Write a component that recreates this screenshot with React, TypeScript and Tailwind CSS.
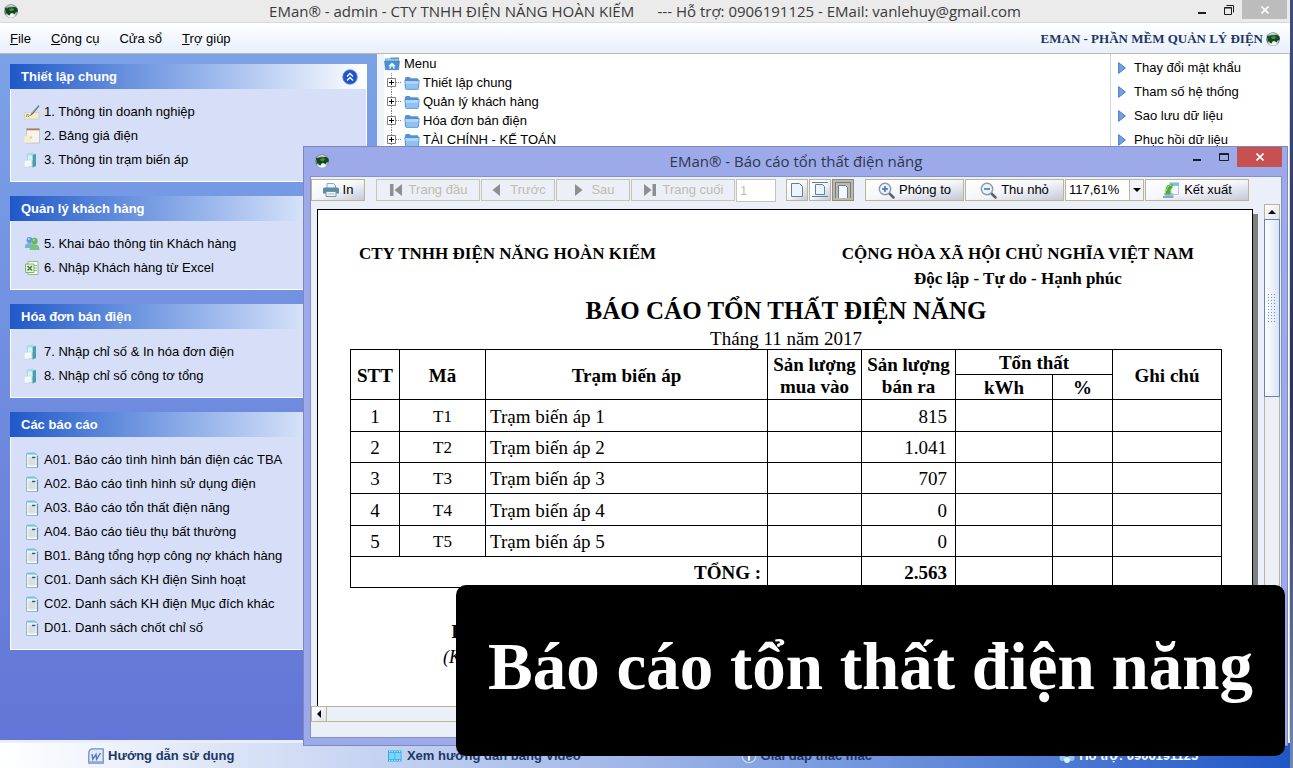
import React from "react";

type IconProps = { className?: string };

const Globe = ({ className = "h-4 w-4" }: IconProps) => (
  <svg viewBox="0 0 16 16" className={`${className} shrink-0`} aria-hidden="true">
    <circle cx="8" cy="8.200" r="6.900" fill="#77858f" />
    <ellipse cx="8" cy="10.500" rx="5.600" ry="4.300" fill="#b4c3ca" />
    <ellipse cx="8" cy="12.500" rx="3.600" ry="2.100" fill="#eef6f8" />
    <path d="M2.500 4.500Q8-.5 13.500 4.500 8 2.500 2.500 4.500z" fill="#dde6ea" />
    <path d="M1.500 4.500l2.500 1 2-1h3l2.500-.8 3 1.800.3 3-2 .8-1.300 2-1.500-1-1-.5-1.500.8-1 2-1.700-.8-.6-1.600-2 .8.700-2.500z" fill="#14471c" />
    <path d="M6 6l3-.8 2.500.8-1.500 1.800-3 .2z" fill="#3f9a3c" />
  </svg>
);

const NoteIcon = () => (
  <svg viewBox="0 0 16 16" className="h-4 w-4 shrink-0" aria-hidden="true">
    <path d="M.5 8.500h14.500v6.500H.5z" fill="#f4efc4" stroke="#c9c8b4" strokeWidth=".6" />
    <path d="M2.500 13q0-4 1.800-2.500T4 13" fill="none" stroke="#8d8a6c" />
    <path d="M14.500 1L7.500 9l-2 3.500L9 10 15.500 2z" fill="#5f6c72" />
    <path d="M14.500 1L8 9" stroke="#b7c3c7" strokeWidth=".7" />
  </svg>
);

const PriceIcon = () => (
  <svg viewBox="0 0 16 16" className="h-4 w-4 shrink-0" aria-hidden="true">
    <path d="M2.500 1h13v14h-13z" fill="#f6f4ee" stroke="#b9b6ae" strokeWidth=".7" />
    <path d="M2.500.5h13v1.800h-13z" fill="#b57b5e" />
    <path d="M.5 7.500h6l1 7H.5z" fill="#f5eecb" />
    <circle cx="7" cy="9.500" r="1" fill="#d9c878" />
  </svg>
);

const StationIcon = () => (
  <svg viewBox="0 0 16 16" className="h-4 w-4 shrink-0" aria-hidden="true">
    <path d="M2.500 2L8 .5l3.500 1V14l-2.500 1.500L3 14z" fill="#a5dbe2" />
    <path d="M8.500 3l3.500-1v12l-3.500 1.500z" fill="#4b9dad" />
    <path d="M4 3l4.500.7v4.800L4 8z" fill="#d5f2f4" />
    <path d="M.3 8.500l7.500-.7v6.500l-7.500.9z" fill="#f4f8f7" stroke="#c6d6d8" strokeWidth=".5" />
  </svg>
);

const PeopleIcon = () => (
  <svg viewBox="0 0 16 16" className="h-4 w-4 shrink-0" aria-hidden="true">
    <circle cx="5.500" cy="4" r="3" fill="#5d9bd3" />
    <path d="M.8 12q0-5 4.700-5t4.700 5z" fill="#78b0dd" />
    <circle cx="10.500" cy="5" r="3.200" fill="#66b36a" />
    <path d="M5.500 14q0-5.800 5-5.800t5 5.800z" fill="#79c17c" />
    <circle cx="9.800" cy="4" r="1" fill="#b7e0b5" />
    <circle cx="4.800" cy="3" r="1" fill="#b9daf2" />
  </svg>
);

const ExcelIcon = () => (
  <svg viewBox="0 0 16 16" className="h-4 w-4 shrink-0" aria-hidden="true">
    <path d="M4 1.500h10v13H4z" fill="#fff" stroke="#8fb886" />
    <path d="M10 5.500h3M10 8h3M10 10.500h3" stroke="#7fb274" />
    <path d="M1.500 4h8.500v8.500H1.500z" fill="#e8f4e2" stroke="#7fb274" />
    <path d="M3.500 6l4.500 4.500M8 6l-4.500 4.500" stroke="#3d8234" strokeWidth="1.500" />
  </svg>
);

const ReportIcon = () => (
  <svg viewBox="0 0 16 16" className="h-4 w-4 shrink-0" aria-hidden="true">
    <path d="M2.500 1.500h8.500l2.500 2v12h-11z" fill="#eeefef" stroke="#8fbcd4" />
    <path d="M13.500 4v11.500" stroke="#5a90ba" strokeWidth="1.200" />
    <path d="M3 .5h8l1.500 2H3z" fill="#6ec3e4" />
    <path d="M4.500 6h4M4.500 8h7M4.500 10h7M4.500 12h7" stroke="#cbcdcd" />
    <path d="M8 5.500h3.500" stroke="#2e5f92" strokeWidth="1.500" />
    <path d="M3 13.500h10v1.500H3z" fill="#f3f9fc" />
  </svg>
);

const Folder = () => (
  <svg viewBox="0 0 16 16" className="h-4 w-4 shrink-0" aria-hidden="true">
    <path d="M1 3.500q0-1.500 1.500-1.500h3l1 1.200h6.500q1.500 0 1.500 1.300v8.500H1z" fill="#5291d6" />
    <path d="M.8 5.500h14.400l-.7 8q-.1.900-1 .9H2.500q-.9 0-1-.9z" fill="#8fc2f2" stroke="#4583cb" strokeWidth=".7" />
    <path d="M1.500 6.200h13l-.2 2.600H1.700z" fill="#b5d9f9" />
  </svg>
);

const HomeFolder = () => (
  <svg viewBox="0 0 16 16" className="h-4 w-4 shrink-0" aria-hidden="true">
    <path d="M1 2.500h5l1-1h8v4H1z" fill="#5a95d2" />
    <path d="M1.500 3.300h13v2h-13z" fill="#a9dcf2" />
    <path d="M.5 5h15l-1 8.700H1.500z" fill="#4e90d4" stroke="#3a77ba" strokeWidth=".6" />
    <path d="M8 6.500l3.500 3.200h-1V12.500H9v-2H7v2H5.500V9.700h-1z" fill="#eaf5ff" />
  </svg>
);

const PrinterIcon = () => (
  <svg viewBox="0 0 16 16" className="h-4 w-4 shrink-0" aria-hidden="true">
    <path d="M4 6V1.500h6.500l2 2V6" fill="#eef4f7" stroke="#8aa9b7" />
    <path d="M1.500 5.500h13q1.500 0 1.500 1.500v4.500H0V7q0-1.500 1.500-1.500z" fill="#5d8ba3" />
    <path d="M3 9.500h10v5H3z" fill="#f1f5f7" stroke="#7296a7" />
    <path d="M4.500 12h7" stroke="#a9bfca" />
  </svg>
);

const NavIcon = ({ kind }: { kind: string }) => (
  <svg viewBox="0 0 14 12" className="h-3 w-[14px] shrink-0" fill="#8f8f8f" aria-hidden="true">
    {kind === "first" && <path d="M1 0h3.500v12H1zM13 0v12L5.500 6z" />}
    {kind === "prev" && <path d="M10 0v12L2.500 6z" />}
    {kind === "next" && <path d="M4 0v12l7.500-6z" />}
    {kind === "last" && <path d="M1 0v12l7.500-6zM9.500 0H13v12H9.500z" />}
  </svg>
);

const PageIcon = ({ kind }: { kind: string }) => (
  <svg viewBox="0 0 18 18" className="h-[18px] w-[18px] shrink-0" fill="none" stroke="#5f7f9e" aria-hidden="true">
    {kind === "page" && <path d="M3.500 2.500h8l3 3v10h-11z" fill="#eef4fb" />}
    {kind === "width" && <path d="M4.500 3.500h7l2 2v8h-9zM1 1.500h16M1 15.500h16" fill="#eef4fb" />}
    {kind === "full" && (
      <>
        <path d="M1.500 17V1.500h15V17" />
        <path d="M4.500 17V4.500h7l2 2V17" fill="#f4f7fb" />
      </>
    )}
  </svg>
);

const ZoomIcon = ({ plus }: { plus?: boolean }) => (
  <svg viewBox="0 0 17 17" className="h-[17px] w-[17px] shrink-0" fill="none" aria-hidden="true">
    <path d="M11 11l4.500 4.500" stroke="#59636e" strokeWidth="2.500" strokeLinecap="round" />
    <circle cx="7" cy="7" r="5.700" fill="#e9f3fc" stroke="#8f9aa6" strokeWidth="1.400" />
    <path d={plus ? "M4 7h6M7 4v6" : "M4 7h6"} stroke="#3b6cc4" strokeWidth="1.500" />
  </svg>
);

const ExportIcon = () => (
  <svg viewBox="0 0 18 18" className="h-[18px] w-[18px] shrink-0" aria-hidden="true">
    <path d="M9 4.500h7.500v9H9z" fill="#f4f8fc" stroke="#b3c8da" />
    <path d="M7 1.500h10v3H9z" fill="#7fbae6" />
    <path d="M2 12h9l1 4.500H3z" fill="#9fc0dd" />
    <path d="M1 15h10v2H1z" fill="#7fa9d0" />
    <path d="M3.500 13.500V9q0-6 7-6v4q-2 0-2 2.500v4z" fill="#4fb02a" />
    <path d="M4.500 10q0-5 5-6" fill="none" stroke="#a8e27c" />
  </svg>
);

const WordIcon = () => (
  <svg viewBox="0 0 16 16" className="h-4 w-4 shrink-0" aria-hidden="true">
    <path d="M5 .8h10.200v14.400H.8V5q0-4.200 4.200-4.200z" fill="#dfe8f6" stroke="#6f8fc4" strokeWidth="1.300" />
    <path d="M4 6l.8 5.200L8 6.500l.6 4.700L12.500 5" fill="none" stroke="#5579b8" strokeWidth="1.400" />
    <path d="M1 14h14" stroke="#8aa6d3" strokeWidth="1.500" />
  </svg>
);

const FilmIcon = () => (
  <svg viewBox="0 0 16 16" className="h-4 w-4 shrink-0" aria-hidden="true">
    <path d="M1 2.500h13.500v11H1z" fill="#29aee8" />
    <path d="M2 5h5.500v6H2zM8.200 5h5.500v6H8.200z" fill="#7fd3f6" />
    <path d="M2 3.700h12M2 12.300h12" stroke="#bfe9fb" strokeWidth="1.200" strokeDasharray="1.300 1.200" />
  </svg>
);

const InfoIcon = () => (
  <svg viewBox="0 0 16 16" className="h-4 w-4 shrink-0" aria-hidden="true">
    <circle cx="8" cy="8" r="6.700" fill="#6f98d2" stroke="#c9d7ea" strokeWidth="1.300" />
    <path d="M8 3.500v2M8 7v5.500" stroke="#fff" strokeWidth="2" />
  </svg>
);

const SupportIcon = () => (
  <svg viewBox="0 0 16 16" className="h-4 w-4 shrink-0" aria-hidden="true">
    <circle cx="8" cy="4" r="2.800" fill="#bfe2f8" />
    <circle cx="3.500" cy="10" r="3" fill="#8cc8f0" />
    <circle cx="12.500" cy="10" r="3" fill="#8cc8f0" />
    <circle cx="8" cy="12" r="3" fill="#d7effc" />
  </svg>
);

const Chevrons = () => (
  <svg viewBox="0 0 16 16" className="h-4 w-4" aria-hidden="true">
    <circle cx="8" cy="8" r="7.300" fill="#1f54c8" stroke="#6d8fe0" strokeWidth=".8" />
    <path d="M5 7.500l3-3 3 3M5 11.500l3-3 3 3" fill="none" stroke="#fff" strokeWidth="1.300" />
  </svg>
);

const BlueArrow = () => (
  <svg viewBox="0 0 8 12" className="h-3 w-2 shrink-0" aria-hidden="true">
    <path d="M.7.7l6.600 5.300L.7 11.300z" fill="#6fa3ec" stroke="#3566c4" strokeWidth=".9" />
  </svg>
);

const Minimize = () => (
  <svg viewBox="0 0 10 10" className="h-[10px] w-[10px]" aria-hidden="true">
    <path d="M1 7h8v2H1z" fill="#1c1c1c" />
  </svg>
);
const Restore = () => (
  <svg viewBox="0 0 10 10" className="h-[10px] w-[10px]" fill="none" stroke="#1c1c1c" aria-hidden="true">
    <path d="M.5 2.500h7v7h-7zM.5 3h7M2.500.5h7v7" />
  </svg>
);
const Maximize = () => (
  <svg viewBox="0 0 10 8" className="h-2 w-[10px]" fill="none" stroke="#1c1c1c" aria-hidden="true">
    <path d="M.5.5h9v7h-9zM.5 1.500h9" />
  </svg>
);
const Close = () => (
  <svg viewBox="0 0 8 8" className="h-2 w-2" aria-hidden="true">
    <path d="M.5.5l7 7M7.500.5l-7 7" stroke="#fff" strokeWidth="1.600" />
  </svg>
);

const panels = [
  {
    title: "Thiết lập chung",
    items: [
      { text: "1. Thông tin doanh nghiệp", icon: <NoteIcon /> },
      { text: "2. Bảng giá điện", icon: <PriceIcon /> },
      { text: "3. Thông tin trạm biến áp", icon: <StationIcon /> },
    ],
  },
  {
    title: "Quản lý khách hàng",
    items: [
      { text: "5. Khai báo thông tin Khách hàng", icon: <PeopleIcon /> },
      { text: "6. Nhập Khách hàng từ Excel", icon: <ExcelIcon /> },
    ],
  },
  {
    title: "Hóa đơn bán điện",
    items: [
      { text: "7. Nhập chỉ số & In hóa đơn điện", icon: <StationIcon /> },
      { text: "8. Nhập chỉ số công tơ tổng", icon: <StationIcon /> },
    ],
  },
  {
    title: "Các báo cáo",
    items: [
      "A01. Báo cáo tình hình bán điện các TBA",
      "A02. Báo cáo tình hình sử dụng điện",
      "A03. Báo cáo tổn thất điện năng",
      "A04. Báo cáo tiêu thụ bất thường",
      "B01. Bảng tổng hợp công nợ khách hàng",
      "C01. Danh sách KH điện Sinh hoạt",
      "C02. Danh sách KH điện Mục đích khác",
      "D01. Danh sách chốt chỉ số",
    ].map((text) => ({ text, icon: <ReportIcon /> })),
  },
];

const treeItems = ["Thiết lập chung", "Quản lý khách hàng", "Hóa đơn bán điện", "TÀI CHÍNH - KẾ TOÁN"];
const quickLinks = ["Thay đổi mật khẩu", "Tham số hệ thống", "Sao lưu dữ liệu", "Phục hồi dữ liệu"];
const stations = [
  { code: "T1", name: "Trạm biến áp 1", sold: "815" },
  { code: "T2", name: "Trạm biến áp 2", sold: "1.041" },
  { code: "T3", name: "Trạm biến áp 3", sold: "707" },
  { code: "T4", name: "Trạm biến áp 4", sold: "0" },
  { code: "T5", name: "Trạm biến áp 5", sold: "0" },
];

const toolButton =
  "flex h-[22px] shrink-0 items-center justify-center gap-1 border border-[#bdb497] bg-linear-to-br from-white via-[#f4f6fa] to-[#c3c9d8]";
const navButton =
  "flex h-[22px] shrink-0 items-center justify-center gap-[6px] border border-[#c9c3b4] bg-[#ebeff8] text-[#c3bba9]";
const cell = "border border-black pt-[2px]";

function Sidebar() {
  return (
    <aside className="flex w-[377px] shrink-0 flex-col gap-[14px] bg-linear-to-b from-[#7ba2e7] to-[#6375d6] p-[10px]">
      {panels.map((panel, index) => (
        <section key={panel.title}>
          <h2 className="flex h-[25px] items-center justify-between bg-linear-to-r from-[#2058c8] to-white pr-[9px] pl-[11px] font-bold text-white">
            {panel.title}
            {index === 0 && (
              <button type="button" aria-label="Thu gọn">
                <Chevrons />
              </button>
            )}
          </h2>
          <ul className="border border-t-0 border-white bg-[#d6dff7] pt-[11px] pb-[9px] pl-[13px]">
            {panel.items.map((item) => (
              <li key={item.text}>
                <a href="#" className="flex h-6 items-center gap-1 whitespace-nowrap">
                  {item.icon}
                  {item.text}
                </a>
              </li>
            ))}
          </ul>
        </section>
      ))}
    </aside>
  );
}

function MenuTree() {
  return (
    <div className="flex-1 border-l-[7px] border-[#edf2fb] bg-white">
      <div className="flex h-[19px] items-center gap-1">
        <HomeFolder />
        Menu
      </div>
      <ul>
        {treeItems.map((item) => (
          <li key={item} className="flex h-[19px] items-center gap-[3px]">
            <svg viewBox="0 0 17 19" className="h-[19px] w-[17px] shrink-0" fill="none" aria-hidden="true">
              <path d="M7.500 0v19M12 9.500h5" stroke="#808080" strokeDasharray="1 1" />
              <path d="M3.500 5.500h8v8h-8z" fill="#fff" stroke="#808080" />
              <path d="M5 9.500h5M7.500 7v5" stroke="#000" />
            </svg>
            <Folder />
            <span>{item}</span>
          </li>
        ))}
      </ul>
    </div>
  );
}

function Report() {
  return (
    <div className="mt-[5px] mr-[11px] ml-[6px] flex-1 border border-b-0 border-black bg-white pt-[31px] pr-[30px] pl-8 font-['Liberation_Serif',serif] text-black shadow-[5px_5px_0_#808080]">
      <div className="flex justify-between pr-7 pl-[9px] text-[17px] leading-[25px] font-bold">
        <p>CTY TNHH ĐIỆN NĂNG HOÀN KIẾM</p>
        <p className="text-center">
          CỘNG HÒA XÃ HỘI CHỦ NGHĨA VIỆT NAM
          <br />
          Độc lập - Tự do - Hạnh phúc
        </p>
      </div>
      <h1 className="mt-1 text-center text-[25px] leading-8 font-bold">BÁO CÁO TỔN THẤT ĐIỆN NĂNG</h1>
      <p className="mt-[2px] text-center text-[19px] leading-5">Tháng 11 năm 2017</p>
      <table className="w-full table-fixed border-collapse text-[19px] leading-[22px]">
        <colgroup>
          <col className="w-[49px]" />
          <col className="w-[86px]" />
          <col />
          <col className="w-[94px]" />
          <col className="w-[94px]" />
          <col className="w-[97px]" />
          <col className="w-[60px]" />
          <col className="w-[109px]" />
        </colgroup>
        <thead>
          <tr className="h-[25px]">
            <th rowSpan={2} className={cell}>STT</th>
            <th rowSpan={2} className={cell}>Mã</th>
            <th rowSpan={2} className={cell}>Trạm biến áp</th>
            <th rowSpan={2} className={cell}>Sản lượng mua vào</th>
            <th rowSpan={2} className={cell}>Sản lượng bán ra</th>
            <th colSpan={2} className={cell}>Tổn thất</th>
            <th rowSpan={2} className={cell}>Ghi chú</th>
          </tr>
          <tr className="h-[25px]">
            <th className={cell}>kWh</th>
            <th className={cell}>%</th>
          </tr>
        </thead>
        <tbody>
          {stations.map((row, index) => (
            <tr key={row.code} className={index % 3 === 0 ? "h-8" : "h-[31px]"}>
              <td className={`${cell} text-center`}>{index + 1}</td>
              <td className={`${cell} text-center text-[17px]`}>{row.code}</td>
              <td className={`${cell} pl-1`}>{row.name}</td>
              <td className={cell} />
              <td className={`${cell} pr-2 text-right`}>{row.sold}</td>
              <td className={cell} />
              <td className={cell} />
              <td className={cell} />
            </tr>
          ))}
          <tr className="h-[31px] font-bold">
            <td colSpan={3} className={`${cell} pr-[6px] text-right`}>TỔNG :</td>
            <td className={cell} />
            <td className={`${cell} pr-2 text-right`}>2.563</td>
            <td className={cell} />
            <td className={cell} />
            <td className={cell} />
          </tr>
        </tbody>
      </table>
      <div className="mt-8 ml-[93px] w-fit text-center text-[18px] leading-[25px]">
        <p className="font-bold">Lập biểu</p>
        <p className="italic">(Ký, họ tên)</p>
      </div>
    </div>
  );
}

function ReportWindow() {
  return (
    <div
      role="dialog"
      aria-labelledby="report-title"
      className="absolute top-[146px] right-[5px] bottom-[22px] left-[303px] flex flex-col border border-[#7d86bd] bg-[#9daae9] pr-[5px] pb-[7px] pl-[6px]"
    >
      <header className="relative flex h-[29px] shrink-0 items-center pb-[2px]">
        <div className="pl-1">
          <Globe />
        </div>
        <h2
          id="report-title"
          className="flex-1 pr-5 text-center font-['Open_Sans','Noto_Sans',sans-serif] text-[15px] text-[#30364c]"
        >
          EMan® - Báo cáo tổn thất điện năng
        </h2>
        <div className="absolute top-0 right-0 flex h-5">
          <button type="button" aria-label="Thu nhỏ cửa sổ" className="flex w-[27px] items-center justify-center">
            <Minimize />
          </button>
          <button type="button" aria-label="Phóng to cửa sổ" className="flex w-[27px] items-center justify-center">
            <Maximize />
          </button>
          <button type="button" aria-label="Đóng" className="flex w-[45px] items-center justify-center bg-[#c75050]">
            <Close />
          </button>
        </div>
      </header>
      <div className="flex min-h-0 flex-1 flex-col border border-[#8590c9] bg-[#ebeff8]">
        <div className="flex h-[27px] shrink-0 items-start gap-px pt-[2px]">
          <button type="button" className={`${toolButton} w-[54px]`}>
            <PrinterIcon />
            In
          </button>
          <button type="button" disabled className={`${navButton} ml-[10px] w-[104px]`}>
            <NavIcon kind="first" />
            Trang đầu
          </button>
          <button type="button" disabled className={`${navButton} w-[74px]`}>
            <NavIcon kind="prev" />
            Trước
          </button>
          <button type="button" disabled className={`${navButton} w-[74px]`}>
            <NavIcon kind="next" />
            Sau
          </button>
          <button type="button" disabled className={`${navButton} w-[104px]`}>
            <NavIcon kind="last" />
            Trang cuối
          </button>
          <input
            aria-label="Số trang"
            defaultValue="1"
            disabled
            className="h-[23px] w-10 shrink-0 border border-[#c9c3b4] bg-white px-[3px] text-[#c3bba9]"
          />
          <button type="button" aria-label="Cả trang" className={`${toolButton} ml-[9px] w-[22px]`}>
            <PageIcon kind="page" />
          </button>
          <button type="button" aria-label="Vừa chiều rộng" className={`${toolButton} w-[22px]`}>
            <PageIcon kind="width" />
          </button>
          <button
            type="button"
            aria-label="Kích thước thật"
            aria-pressed="true"
            className="flex h-[22px] w-[22px] shrink-0 items-center justify-center border border-[#8f8a7c] bg-[#c2b8a6]"
          >
            <PageIcon kind="full" />
          </button>
          <button type="button" className={`${toolButton} ml-[10px] w-[99px]`}>
            <ZoomIcon plus />
            Phóng to
          </button>
          <button type="button" className={`${toolButton} w-[99px]`}>
            <ZoomIcon />
            Thu nhỏ
          </button>
          <div className="relative flex h-[22px] w-[79px] shrink-0 border border-[#bdb497] bg-white">
            <select aria-label="Tỷ lệ" className="w-full appearance-none pl-[3px] outline-none">
              <option>117,61%</option>
            </select>
            <span className="pointer-events-none absolute inset-y-0 right-0 flex w-[14px] items-center justify-center border-l border-[#bdb497] bg-[#f2f4f9]">
              <svg viewBox="0 0 8 4" className="h-1 w-2" aria-hidden="true">
                <path d="M0 0h8L4 4z" />
              </svg>
            </span>
          </div>
          <button type="button" className={`${toolButton} w-[104px]`}>
            <ExportIcon />
            Kết xuất
          </button>
        </div>
        <div className="flex min-h-0 flex-1">
          <div className="flex min-w-0 flex-1 flex-col">
            <div className="flex min-h-0 flex-1 overflow-hidden">
              <Report />
            </div>
            <div className="flex h-4 shrink-0 border border-[#bdb497]">
              <button
                type="button"
                aria-label="Cuộn sang trái"
                className="flex w-[15px] items-center justify-center border-r border-[#bdb497] bg-linear-to-br from-white to-[#dfe3ec]"
              >
                <svg viewBox="0 0 4 8" className="h-2 w-1" aria-hidden="true">
                  <path d="M4 0v8L0 4z" />
                </svg>
              </button>
            </div>
          </div>
          <div className="mr-px flex w-4 flex-col border border-[#bdb497]">
            <button
              type="button"
              aria-label="Cuộn lên"
              className="flex h-[14px] items-center justify-center bg-linear-to-br from-white to-[#dfe3ec]"
            >
              <svg viewBox="0 0 8 4" className="h-1 w-2" aria-hidden="true">
                <path d="M0 4h8L4 0z" />
              </svg>
            </button>
            <div className="-mx-px flex h-[178px] items-center justify-center border border-[#5f87b8] bg-linear-to-r from-white to-[#dbe3f3]">
              <div className="h-[30px] w-[10px] bg-[radial-gradient(circle,#6d97cc_1px,transparent_1px)] bg-size-[3px_3px]" />
            </div>
          </div>
        </div>
        <div className="h-[15px] shrink-0" />
      </div>
    </div>
  );
}

const footerLinks = [
  { text: "Hướng dẫn sử dụng", icon: <WordIcon />, tone: "text-[#1c3768]" },
  { text: "Xem hướng dẫn bằng Video", icon: <FilmIcon />, tone: "text-[#1c3768]" },
  { text: "Giải đáp thắc mắc", icon: <InfoIcon />, tone: "text-[#1c3768]" },
  { text: "Hỗ trợ: 0906191125", icon: <SupportIcon />, tone: "text-white" },
];

export default function App() {
  return (
    <div className="relative flex min-h-screen w-full font-['Liberation_Sans',sans-serif] text-[13px] leading-5 text-black">
      <div className="flex min-w-0 flex-1 flex-col">
        <header className="relative flex h-[23px] items-center border-b border-[#d9d9d9] bg-[#ebebeb]">
          <div className="pl-[3px]">
            <Globe />
          </div>
          <h1 className="flex-1 pr-[19px] text-center font-['Open_Sans','Noto_Sans',sans-serif] text-[15px] whitespace-pre text-[#3a3a3a]">
            {"EMan® - admin - CTY TNHH ĐIỆN NĂNG HOÀN KIẾM      --- Hỗ trợ: 0906191125 - EMail: vanlehuy@gmail.com"}
          </h1>
          <div className="absolute top-0 right-[3px] flex h-[19px]">
            <button type="button" aria-label="Thu nhỏ cửa sổ" className="flex w-[27px] items-center justify-center">
              <Minimize />
            </button>
            <button type="button" aria-label="Khôi phục cửa sổ" className="flex w-[27px] items-center justify-center">
              <Restore />
            </button>
            <button type="button" aria-label="Đóng" className="flex w-[45px] items-center justify-center bg-[#bcbcbc]">
              <Close />
            </button>
          </div>
        </header>
        <nav className="flex h-[31px] items-center gap-5 border-b border-[#c3b9a0] bg-linear-to-b from-white to-[#e8effc] pt-[2px] pr-[9px] pl-[10px]">
          <button type="button"><u>F</u>ile</button>
          <button type="button"><u>C</u>ông cụ</button>
          <button type="button">Cửa sổ</button>
          <button type="button"><u>T</u>rợ giúp</button>
          <div className="ml-auto flex items-center gap-[2px] font-['Liberation_Serif',serif] text-[13px] font-bold text-[#1c3768]">
            EMAN - PHẦN MỀM QUẢN LÝ ĐIỆN
            <Globe />
          </div>
        </nav>
        <div className="flex flex-1">
          <Sidebar />
          <MenuTree />
          <ul className="w-[180px] border-x border-[#cdd7ea] bg-white pt-[2px] pl-[7px]">
            {quickLinks.map((link) => (
              <li key={link}>
                <a href="#" className="flex h-6 items-center gap-2">
                  <BlueArrow />
                  {link}
                </a>
              </li>
            ))}
          </ul>
        </div>
        <footer className="grid h-7 grid-cols-4 border-t-[3px] border-[#e9effa] bg-linear-to-r from-white via-[#9db4e6] to-[#1f57c6] font-bold">
          {footerLinks.map((link) => (
            <a key={link.text} href="#" className={`flex items-center justify-center gap-1 ${link.tone}`}>
              {link.icon}
              {link.text}
            </a>
          ))}
        </footer>
      </div>
      <div className="w-[3px] bg-linear-to-b from-[#3f4f7d] via-[#2b3355] to-[#7488ad]" />
      <ReportWindow />
      <div className="absolute top-[585px] right-2 bottom-3 left-[456px] flex items-center justify-center rounded-[10px] bg-black pb-2 font-['Liberation_Serif',serif] text-[67px] leading-none font-bold whitespace-nowrap text-white">
        Báo cáo tổn thất điện năng
      </div>
    </div>
  );
}
